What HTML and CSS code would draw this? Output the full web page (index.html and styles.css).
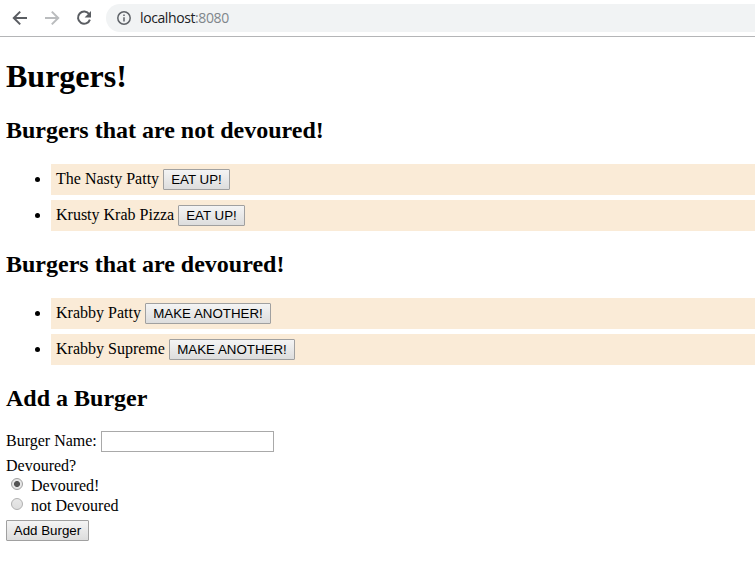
FILE: index.html
```html
<!DOCTYPE html>
<html lang="en">
<head>
<meta charset="utf-8">
<title>Burgers</title>
<link rel="stylesheet" href="styles.css">
</head>
<body>
<header class="toolbar">
  <svg class="nav" viewBox="0 0 16 16"><path d="M15 8H2.2M8.2 1.6L1.8 8l6.4 6.4"/></svg>
  <svg class="nav nav-off" viewBox="0 0 16 16"><path d="M1 8h12.8M7.8 1.6L14.2 8l-6.4 6.4"/></svg>
  <svg class="nav" viewBox="0 0 16 16"><path d="M13.2 4.3A6.1 6.1 0 1 0 13.9 9.6"/><path class="solid" d="M15 1v6.4H8.6z"/></svg>
  <div class="address">
    <svg class="info" viewBox="0 0 14 14"><circle cx="7" cy="7" r="6.2"/><path d="M7 6.2v4.3M7 3.4v1.7"/></svg>
    <span class="url"><span class="host">localhost</span>:8080</span>
  </div>
</header>
<main class="page">
  <h1>Burgers!</h1>
  <h2>Burgers that are not devoured!</h2>
  <ul>
    <li><span class="t-nasty">The Nasty Patty</span><button class="eat">EAT UP!</button></li>
    <li><span class="t-pizza">Krusty Krab Pizza</span><button class="eat">EAT UP!</button></li>
  </ul>
  <h2>Burgers that are devoured!</h2>
  <ul>
    <li><span class="t-patty">Krabby Patty</span><button class="make">MAKE ANOTHER!</button></li>
    <li><span class="t-supreme">Krabby Supreme</span><button class="make">MAKE ANOTHER!</button></li>
  </ul>
  <h2>Add a Burger</h2>
  <form>
    <div class="field"><label for="name">Burger Name:</label><input id="name" type="text"></div>
    <div class="question">Devoured?</div>
    <label class="option"><input type="radio" name="devoured" checked><span>Devoured!</span></label>
    <label class="option"><input type="radio" name="devoured"><span>not Devoured</span></label>
    <button class="add" type="button">Add Burger</button>
  </form>
</main>
</body>
</html>
```
FILE: styles.css
```css
* { box-sizing: border-box; }
body {
  margin: 0;
  background: #fff;
  color: #000;
  font: 16px/20px "Liberation Serif", "Times New Roman", serif;
  overflow: hidden;
}
.toolbar {
  display: flex;
  align-items: center;
  height: 37px;
  padding-left: 12px;
  border-bottom: 1px solid #b4b5b7;
}
.nav {
  width: 16px;
  height: 16px;
  margin-right: 16px;
  fill: none;
  stroke: #5a5d62;
  stroke-width: 2;
}
.nav-off { stroke: #babcbe; }
.nav .solid { fill: #5a5d62; stroke: none; }
.address {
  display: flex;
  flex: 1;
  align-items: center;
  height: 28px;
  margin-left: -2px;
  padding-left: 11px;
  background: #f1f3f4;
  border-radius: 14px 0 0 14px;
}
.info {
  width: 14px;
  height: 14px;
  margin-right: 9px;
  fill: none;
  stroke: #5f6368;
  stroke-width: 1.5;
}
.url {
  color: #80868b;
  font: 14px/20px "Open Sans", "Noto Sans", sans-serif;
  letter-spacing: -0.4px;
}
.host { color: #202124; }
.page { padding: 0 0 0 6px; }
h1 {
  margin: 21px 0 0;
  font-size: 32px;
  line-height: 37px;
}
h2 {
  margin: 22px 0 20px;
  font-size: 24px;
  line-height: 27px;
}
ul {
  margin: 0;
  padding: 0 0 0 45px;
}
li {
  height: 31px;
  margin-bottom: 5px;
  padding: 5px;
  background: #faebd7;
}
li span {
  display: inline-block;
  height: 19px;
  line-height: 19px;
  vertical-align: top;
  white-space: nowrap;
}
.t-nasty { width: 107px; }
.t-pizza { width: 122px; }
.t-patty { width: 89px; }
.t-supreme { width: 113px; }
ul + h2 { margin-top: 20px; }
button {
  height: 21px;
  padding: 0;
  border: 1px solid #a0a0a0;
  border-radius: 1px;
  background: linear-gradient(#f4f4f4, #dddddd);
  color: #000;
  font: 13.333px/19px "Liberation Sans", Arial, sans-serif;
  vertical-align: top;
}
.eat { width: 67px; }
.make { width: 126px; }
.add {
  display: block;
  width: 83px;
  margin-top: 4px;
}
form { margin-top: -1px; }
.field {
  display: flex;
  height: 21px;
}
.field label { width: 95px; }
.field input {
  width: 173px;
  height: 21px;
  padding: 1px;
  border: 1px solid #a9a9a9;
  background: #fff;
}
.question { margin-top: 4px; }
.option {
  display: flex;
  height: 20px;
}
.option input {
  appearance: none;
  width: 12px;
  height: 12px;
  margin: 2px 8px 0 5px;
  border: 1px solid #b0b0b0;
  border-radius: 50%;
  background: linear-gradient(#e8e8e8, #dedede);
}
.option input:checked {
  border-color: #a0a0a0;
  background: radial-gradient(circle, #555 2.6px, #e6e6e6 3.4px);
}
```
